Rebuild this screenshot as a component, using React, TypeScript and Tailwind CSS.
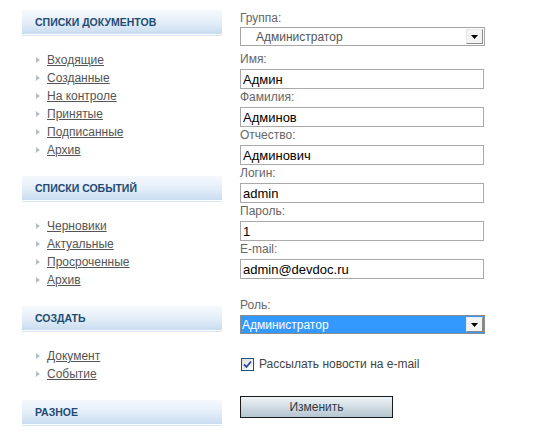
import React from "react";

const SECTIONS = [
  {
    title: "Списки документов",
    items: ["Входящие", "Созданные", "На контроле", "Принятые", "Подписанные", "Архив"],
  },
  {
    title: "Списки событий",
    items: ["Черновики", "Актуальные", "Просроченные", "Архив"],
  },
  {
    title: "Создать",
    items: ["Документ", "Событие"],
  },
];

const FIELDS = [
  { label: "Имя:", value: "Админ" },
  { label: "Фамилия:", value: "Админов" },
  { label: "Отчество:", value: "Админович" },
  { label: "Логин:", value: "admin" },
  { label: "Пароль:", value: "1" },
  { label: "E-mail:", value: "admin@devdoc.ru" },
];

// заголовок блока в левой колонке
const BlockHeader = ({ title }: { title: string }) => (
  <div className="h-[26px] flex items-center pl-[13px] bg-linear-to-b from-[#f5f9fd] via-[#e4eef8] to-[#c6dbef] border-b border-[#d8e7f5] shadow-[inset_0_-1px_0_#ffffff]">
    <span className="text-[10.5px] font-bold uppercase text-[#1f4b73]">{title}</span>
  </div>
);

const Bullet = () => (
  <svg width="4" height="6" viewBox="0 0 4 6" className="shrink-0">
    <polygon points="0,0 4,3 0,6" fill="#b5bec6" />
  </svg>
);

const DropArrow = () => (
  <span className="w-[17px] h-[15px] flex items-center justify-center bg-[#f4f4f4] border border-t-[#e8e8e8] border-l-[#e8e8e8] border-r-[#8a8a8a] border-b-[#8a8a8a]">
    <svg width="7" height="4" viewBox="0 0 7 4">
      <polygon points="0,0 7,0 3.5,4" fill="#000" />
    </svg>
  </span>
);

export default function App() {
  return (
    <div className="w-[537px] h-[444px] bg-white flex pl-[22px] pt-[10px] font-['Liberation_Sans',Arial,sans-serif] overflow-hidden">
      {/* левая колонка */}
      <div className="w-[200px] shrink-0 flex flex-col">
        {SECTIONS.map((s) => (
          <div key={s.title}>
            <BlockHeader title={s.title} />
            <ul className="pt-[15px] pb-[17px]">
              {s.items.map((item) => (
                <li key={item} className="h-[18px] flex items-center pl-[14px] gap-[7px]">
                  <Bullet />
                  <a href="#" className="text-[12px] leading-[14px] text-[#555] underline">
                    {item}
                  </a>
                </li>
              ))}
            </ul>
          </div>
        ))}
        <BlockHeader title="Разное" />
      </div>

      {/* форма */}
      <div className="ml-[18px] w-[245px] pt-[1px] flex flex-col">
        <div className="text-[12px] leading-[14px] text-[#666]">Группа:</div>
        <div className="mt-[2px] h-[19px] border border-[#a5a5a5] flex items-center justify-between pl-[15px] pr-[1px]">
          <span className="text-[12px] text-[#555]">Администратор</span>
          <DropArrow />
        </div>

        <div className="mt-[6px] flex flex-col gap-[1px]">
          {FIELDS.map((f) => (
            <div key={f.label} className="flex flex-col">
              <div className="text-[12px] leading-[14px] text-[#666]">{f.label}</div>
              <input
                readOnly
                defaultValue={f.value}
                className="mt-[3px] h-[20px] w-[244px] border border-[#a9a9a9] px-[2px] text-[13px] text-black outline-none"
              />
            </div>
          ))}
        </div>

        <div className="mt-[19px] text-[12px] leading-[14px] text-[#666]">Роль:</div>
        <div className="mt-[3px] h-[19px] border border-[#8c8c8c] bg-[#3399ff] flex items-center justify-between pl-[1px] pr-[1px]">
          <span className="text-[12px] text-white">Администратор</span>
          <DropArrow />
        </div>

        <div className="mt-[23px] h-[14px] flex items-center gap-[5px] pl-[1px]">
          <span className="w-[13px] h-[13px] border border-[#1c5180] bg-linear-to-br from-[#dcdcd7] to-[#ffffff] flex items-center justify-center">
            <svg width="9" height="9" viewBox="0 0 9 9">
              <path d="M1 4.5 L3.5 7 L8 1.5" stroke="#2d47a6" strokeWidth="1.8" fill="none" />
            </svg>
          </span>
          <span className="text-[12px] text-[#444]">Рассылать новости на e-mail</span>
        </div>

        <button className="mt-[25px] w-[153px] h-[22px] border border-[#1a1a1a] bg-linear-to-b from-[#eef3f6] to-[#b6c6d0] text-[12px] text-[#2f3b46]">
          Изменить
        </button>
      </div>
    </div>
  );
}
